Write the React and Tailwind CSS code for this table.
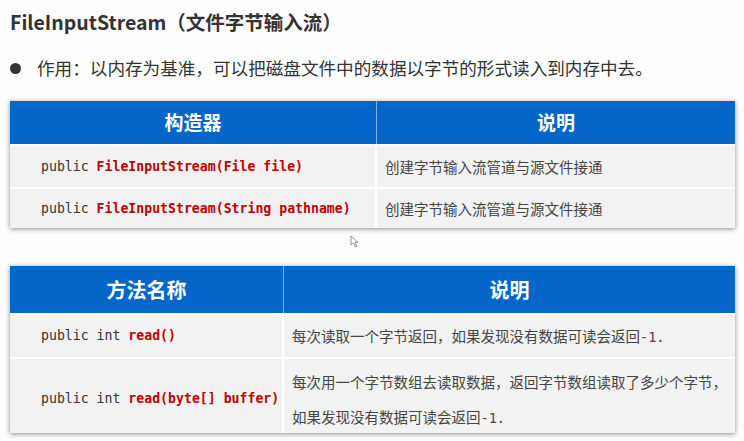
import React from "react";

const cjk = { fontFamily: '"Noto Sans CJK SC", "Noto Sans", sans-serif' };
const mono = { fontFamily: '"DejaVu Sans Mono", "Liberation Mono", monospace' };

function Code({ pre, name }) {
  return (
    <span style={mono} className="text-[13.2px] text-[#333]">
      {pre} <span className="font-bold text-[#c00000]">{name}</span>
    </span>
  );
}

function M({ children }) {
  return <span style={mono} className="text-[13.5px]">{children}</span>;
}

export default function App() {
  return (
    <div style={cjk} className="relative w-[744px] h-[441px] bg-[#fdfdfd] overflow-hidden pl-[10px] pr-[9px]">
      <div className="pt-[8px] h-[36px] text-[19.5px] font-bold text-[#333] leading-[28px]">
        FileInputStream（文件字节输入流）
      </div>
      <div className="mt-[18px] flex items-center h-[28px] text-[17.6px] text-[#333]">
        <span className="w-[11px] h-[11px] rounded-full bg-[#333] mr-[16px]"></span>
        <span>作用：以内存为基准，可以把磁盘文件中的数据以字节的形式读入到内存中去。</span>
      </div>

      <div className="mt-[19px] w-[725px] shadow-[0_1px_5px_rgba(0,0,0,0.45)] bg-white">
        <div className="flex h-[43px] bg-[#0366c8] text-white text-[19px] font-bold">
          <div className="w-[367px] flex items-center justify-center border-r border-[#7fb0e0]">构造器</div>
          <div className="flex-1 flex items-center justify-center">说明</div>
        </div>
        <div className="flex h-[41px] mt-[2px] bg-[#f2f2f2]">
          <div className="w-[367px] flex items-center pl-[31px] border-r-2 border-white">
            <Code pre="public" name="FileInputStream(File file)" />
          </div>
          <div className="flex-1 flex items-center pl-[8px] text-[14.5px] text-[#444]">创建字节输入流管道与源文件接通</div>
        </div>
        <div className="flex h-[39px] mt-[2px] bg-[#f2f2f2]">
          <div className="w-[367px] flex items-center pl-[31px] border-r-2 border-white">
            <Code pre="public" name="FileInputStream(String pathname)" />
          </div>
          <div className="flex-1 flex items-center pl-[8px] text-[14.5px] text-[#444]">创建字节输入流管道与源文件接通</div>
        </div>
      </div>

      <div className="mt-[38px] w-[725px] shadow-[0_1px_5px_rgba(0,0,0,0.45)] bg-white">
        <div className="flex h-[47px] bg-[#0366c8] text-white text-[20px] font-bold">
          <div className="w-[274px] flex items-center justify-center border-r border-[#7fb0e0]">方法名称</div>
          <div className="flex-1 flex items-center justify-center">说明</div>
        </div>
        <div className="flex h-[42px] mt-[2px] bg-[#f2f2f2]">
          <div className="w-[274px] flex items-center pl-[31px] border-r-2 border-white">
            <Code pre="public int" name="read()" />
          </div>
          <div className="flex-1 flex items-center pl-[8px] text-[14.5px] text-[#444]">
            <span>每次读取一个字节返回，如果发现没有数据可读会返回<M>-1.</M></span>
          </div>
        </div>
        <div className="flex h-[74px] mt-[2px] bg-[#f2f2f2]">
          <div className="w-[274px] flex items-center pt-[6px] pl-[31px] border-r-2 border-white">
            <Code pre="public int" name="read(byte[] buffer)" />
          </div>
          <div className="flex-1 flex flex-col justify-center pt-[8px] pl-[8px] text-[14.5px] text-[#444] leading-[35px]">
            <span>每次用一个字节数组去读取数据，返回字节数组读取了多少个字节，</span>
            <span>如果发现没有数据可读会返回<M>-1.</M></span>
          </div>
        </div>
      </div>

      <svg className="absolute left-[350px] top-[235px]" width="10" height="13" viewBox="0 0 10 13">
        <path d="M1 1 L1 10 L3.5 8 L5.5 12 L7 11.3 L5 7.5 L8 7.5 Z" fill="#fff" stroke="#777" strokeWidth="0.8" />
      </svg>
    </div>
  );
}
